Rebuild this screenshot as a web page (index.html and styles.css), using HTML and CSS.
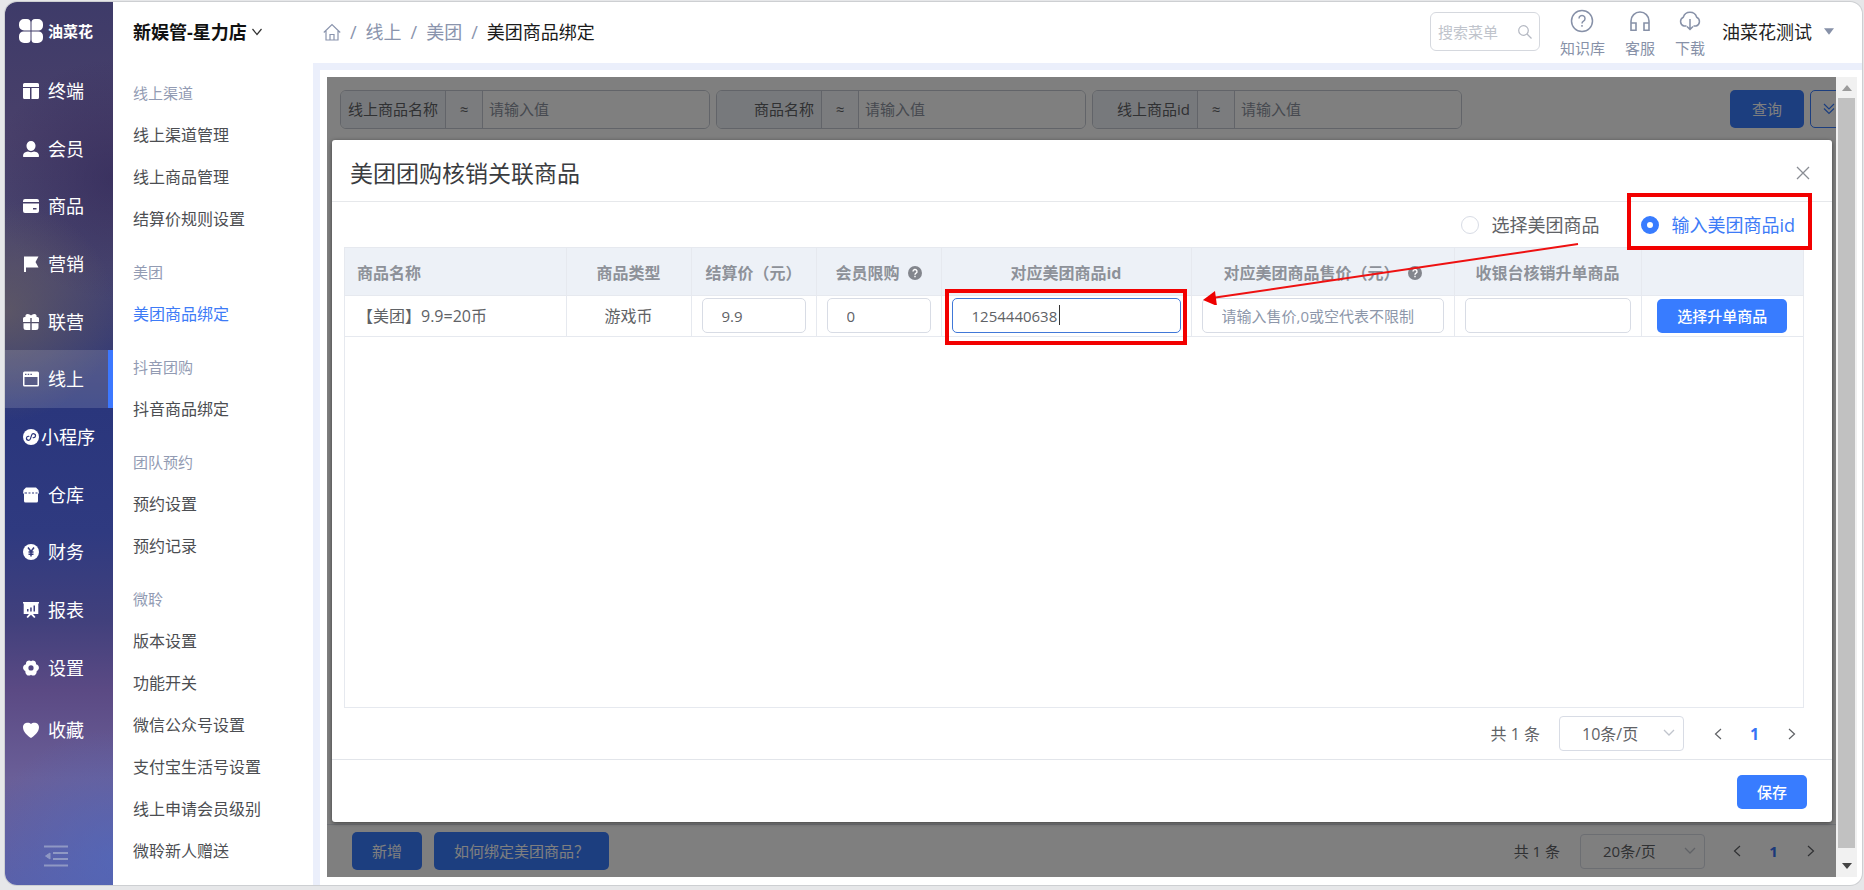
FILE: index.html
```html
<!DOCTYPE html>
<html lang="zh-CN">
<head>
<meta charset="utf-8">
<title>美团商品绑定</title>
<link rel="stylesheet" href="styles.css">
</head>
<body>
<div class="window">
  <aside class="rail">
    <div class="logo">
      <svg class="logo-mark" viewBox="0 0 24 24" fill="#fff"><path d="M5 0h3a3.500 3.500 0 0 1 3.500 3.500V11.500H5A5 5 0 0 1 0 6.500V5a5 5 0 0 1 5-5zM16 0h3a5 5 0 0 1 5 5v2a4.500 4.500 0 0 1-4.500 4.500H12.500V3.500A3.500 3.500 0 0 1 16 0zM4.500 12.500H11.500V20.500A3.500 3.500 0 0 1 8 24H5a5 5 0 0 1-5-5v-2a4.500 4.500 0 0 1 4.500-4.500zM12.500 12.500h7A4.500 4.500 0 0 1 24 17v2a5 5 0 0 1-5 5h-3a3.500 3.500 0 0 1-3.500-3.500z"/></svg>
      <span>油菜花</span>
    </div>
    <nav class="rail-nav">
      <a class="rail-item" href="#"><svg viewBox="0 0 16 16" fill="#fff"><path d="M1.500 0h13A1.500 1.500 0 0 1 16 1.500V4H0V1.500A1.500 1.500 0 0 1 1.500 0zM0 5h7v11H1.500A1.500 1.500 0 0 1 0 14.500zM8.500 5H16v9.500a1.500 1.500 0 0 1-1.500 1.500h-6z"/></svg><span>终端</span></a>
      <a class="rail-item" href="#"><svg viewBox="0 0 16 16" fill="#fff"><path d="M8 0a4.500 4.500 0 0 1 4.500 4.800C12.500 7.500 10.800 10 8 10S3.500 7.500 3.500 4.800A4.500 4.500 0 0 1 8 0zM5 10.500q3 1.500 6 0c3 .5 5 1.500 5 4.500 0 .7-.3 1-1 1H1c-.7 0-1-.3-1-1 0-3 2-4 5-4.500z"/></svg><span>会员</span></a>
      <a class="rail-item" href="#"><svg viewBox="0 0 16 16" fill="#fff"><path fill-rule="evenodd" d="M2 1h12a2 2 0 0 1 2 2v1H0V3a2 2 0 0 1 2-2zM0 5.500h16V13a2 2 0 0 1-2 2H2a2 2 0 0 1-2-2zM10 10v1.500h3.500V10z"/></svg><span>商品</span></a>
      <a class="rail-item" href="#"><svg viewBox="0 0 16 16" fill="#fff"><path d="M1 0.500h14.500L12.500 6l3 5.500H3V16H1z"/></svg><span>营销</span></a>
      <a class="rail-item" href="#"><svg viewBox="0 0 16 16" fill="#fff"><path d="M4.500 0C6.500 0 8 1.500 8 1.500S9.500 0 11.500 0A2.200 2.200 0 0 1 13.500 3h1A1.500 1.500 0 0 1 16 4.500V8H8.700V4H7.300v4H0V4.500A1.500 1.500 0 0 1 1.500 3h1a2.200 2.200 0 0 1 2-3zM.5 9.300h6.800V16H3a2.500 2.500 0 0 1-2.500-2.500zM8.700 9.300h6.800v4.200A2.500 2.500 0 0 1 13 16H8.700z"/></svg><span>联营</span></a>
      <a class="rail-item active" href="#"><svg viewBox="0 0 16 16" fill="#fff"><path fill-rule="evenodd" d="M1.500 .5h13A1.500 1.500 0 0 1 16 2v12a1.500 1.500 0 0 1-1.500 1.500h-13A1.500 1.500 0 0 1 0 14V2A1.500 1.500 0 0 1 1.500 .5zM1.500 6v8h13V6zM2 2.700V4h1.500V2.700zm2.700 0V4h1.500V2.700zm2.700 0V4h1.500V2.700z"/></svg><span>线上</span></a>
      <a class="rail-item wide" href="#"><svg viewBox="0 0 16 16"><circle cx="8" cy="8" r="8" fill="#fff"/><path d="M8 6a2 2 0 1 1 2.300 2M8 6v4a2 2 0 1 1-2.300-2" fill="none" stroke="#2b357c" stroke-width="1.200" stroke-linecap="round" transform="rotate(18 8 8)"/></svg><span>小程序</span></a>
      <a class="rail-item" href="#"><svg viewBox="0 0 16 16" fill="#fff"><path fill-rule="evenodd" d="M3 0.500h10L15.500 3 16 6.500H15V14a1.500 1.500 0 0 1-1.500 1.500h-11A1.500 1.500 0 0 1 1 14V6.500H0L.5 3zM1.500 5.500v1h2.500v-1zm4 0v1h2v-1zm3.500 0v1h2v-1zm3.500 0v1h2v-1z"/></svg><span>仓库</span></a>
      <a class="rail-item" href="#"><svg viewBox="0 0 16 16"><circle cx="8" cy="8" r="8" fill="#fff"/><path d="M5 3.500l3 4 3-4M8 7.500v5M5.500 8h5M5.500 10.300h5" fill="none" stroke="#343a7c" stroke-width="1.500"/></svg><span>财务</span></a>
      <a class="rail-item" href="#"><svg viewBox="0 0 16 16" fill="#fff"><path fill-rule="evenodd" d="M0 0h16v1.500h-.7V12H10l2.500 3-1.300 1L8 12.700 4.800 16l-1.300-1L6 12H.7V1.500H0zM4 7v2.500h1.500V7zm3.200-1.500v4h1.500v-4zM10.500 3.500v6H12v-6z"/></svg><span>报表</span></a>
      <a class="rail-item" href="#"><svg viewBox="0 0 16 16" fill="#fff"><path fill-rule="evenodd" d="M8 1.300C9.500-.5 13.500.8 13 4.200 16.500 5 17 9.500 13.700 11c.3 4-3.700 5.800-5.700 3.700-2 2.100-6 .3-5.700-3.700C-1 9.500-.5 5 3 4.200 2.500.8 6.500-.5 8 1.300zM8 5.300a2.600 2.600 0 1 0 0 5.200 2.600 2.600 0 0 0 0-5.200z"/></svg><span>设置</span></a>
      <a class="rail-item fav" href="#"><svg viewBox="0 0 16 16" fill="#fff"><path d="M8 2C9.800-.3 16 0 16 5.300 16 10 11 14.300 8 16 5 14.300 0 10 0 5.300 0 0 6.200-.3 8 2z"/></svg><span>收藏</span></a>
    </nav>
    <div class="rail-foot">
      <button class="collapse" aria-label="收起菜单"><svg viewBox="0 0 24 22" width="24" height="22" fill="none" stroke="#8f98c4" stroke-width="2"><path d="M0 1.500h24M9 8h15M9 14h15M0 20.500h24"/><path d="M6 8v6L1.500 11z" fill="#8f98c4" stroke-width="1"/></svg></button>
    </div>
  </aside>

  <div class="main">
    <header class="topbar">
      <button class="store">新娱管-星力店 <svg viewBox="0 0 10 8" width="10" height="8" fill="none" stroke="#333" stroke-width="1.200"><path d="M.5 1L5 6.500 9.500 1"/></svg></button>
      <nav class="crumbs">
        <a href="#" aria-label="首页"><svg viewBox="0 0 18 18" width="18" height="18" fill="none" stroke="#8a94ad" stroke-width="1.200"><path d="M.8 9.500L9 1.500l8.200 8M3 8v9h12V8M7 17v-5.500h4V17"/></svg></a>
        <i>/</i><a href="#">线上</a><i>/</i><a href="#">美团</a><i>/</i><b>美团商品绑定</b>
      </nav>
      <div class="tools">
        <label class="search"><input type="text" placeholder="搜索菜单" aria-label="搜索菜单"><svg viewBox="0 0 14 14" width="14" height="14" fill="none" stroke="#b4b8c2" stroke-width="1.200"><circle cx="5.500" cy="5.500" r="4.800"/><path d="M9 9l4.500 4.500"/></svg></label>
        <a class="tool" href="#"><svg viewBox="0 0 24 24" width="24" height="24" fill="none" stroke="#8791a8" stroke-width="1.500"><circle cx="12" cy="12" r="10.500"/><path d="M9 9.500a3 3 0 1 1 4.500 2.600c-1 .6-1.500 1-1.500 2.400M12 16v1.700"/></svg><span>知识库</span></a>
        <a class="tool" href="#"><svg viewBox="0 0 24 24" width="24" height="24" fill="none" stroke="#8791a8" stroke-width="1.600"><path d="M3 21v-9a9 9 0 0 1 18 0v9M3 14h5v7.200H3zM16 14h5v7.200h-5z"/></svg><span>客服</span></a>
        <a class="tool" href="#"><svg viewBox="0 0 24 24" width="24" height="24" fill="none" stroke="#8791a8" stroke-width="1.500"><path d="M8.500 17H6A4.700 4.700 0 0 1 5.300 8.200a7 7 0 0 1 13.400 0A4.700 4.700 0 0 1 18 17h-2.500M12 10v10M9 17.500l3 3 3-3"/></svg><span>下载</span></a>
        <button class="user">油菜花测试 <svg viewBox="0 0 12 8" width="10" height="7" fill="#8791a8"><path d="M0 0h12L6 8z"/></svg></button>
      </div>
    </header>

    <div class="body">
      <nav class="submenu">
        <section><h3>线上渠道</h3><a href="#">线上渠道管理</a><a href="#">线上商品管理</a><a href="#">结算价规则设置</a></section>
        <section><h3>美团</h3><a class="current" href="#">美团商品绑定</a></section>
        <section><h3>抖音团购</h3><a href="#">抖音商品绑定</a></section>
        <section><h3>团队预约</h3><a href="#">预约设置</a><a href="#">预约记录</a></section>
        <section><h3>微聆</h3><a href="#">版本设置</a><a href="#">功能开关</a><a href="#">微信公众号设置</a><a href="#">支付宝生活号设置</a><a href="#">线上申请会员级别</a><a href="#">微聆新人赠送</a></section>
      </nav>

      <div class="frame">
        <div class="page">
          <div class="filters">
            <div class="filter"><label for="f1">线上商品名称</label><span>≈</span><input id="f1" type="text" placeholder="请输入值"></div>
            <div class="filter"><label for="f2">商品名称</label><span>≈</span><input id="f2" type="text" placeholder="请输入值"></div>
            <div class="filter"><label for="f3">线上商品id</label><span>≈</span><input id="f3" type="text" placeholder="请输入值"></div>
            <div class="filter-actions">
              <button class="btn">查询</button>
              <button class="btn-more" aria-label="展开"><svg viewBox="0 0 12 12" width="12" height="12" fill="none" stroke="#387cff" stroke-width="1.200"><path d="M1 1l5 5 5-5M1 5.500l5 5 5-5"/></svg></button>
            </div>
          </div>
          <div class="list"></div>
          <div class="page-foot">
            <button class="btn">新增</button>
            <button class="btn">如何绑定美团商品？</button>
            <div class="pager">
              <span class="total">共 1 条</span>
              <span class="size"><select aria-label="每页条数"><option>20条/页</option></select><svg viewBox="0 0 12 8" width="12" height="8" fill="none" stroke="#c0c4cc" stroke-width="1.300"><path d="M1 1l5 5 5-5"/></svg></span>
              <button aria-label="上一页"><svg viewBox="0 0 8 12" width="8" height="12" fill="none" stroke="#606266" stroke-width="1.200"><path d="M7 1L1.500 6 7 11"/></svg></button>
              <button class="on">1</button>
              <button aria-label="下一页"><svg viewBox="0 0 8 12" width="8" height="12" fill="none" stroke="#606266" stroke-width="1.200"><path d="M1 1l5.500 5L1 11"/></svg></button>
            </div>
          </div>

          <div class="mask">
            <div class="modal" role="dialog" aria-labelledby="dlg-title">
              <div class="modal-head">
                <h2 id="dlg-title">美团团购核销关联商品</h2>
                <button class="close" aria-label="关闭"><svg viewBox="0 0 14 14" width="14" height="14" stroke="#8a8d94" stroke-width="1.300"><path d="M1 1l12 12M13 1L1 13"/></svg></button>
              </div>
              <div class="modal-body">
                <div class="modes">
                  <label><input type="radio" name="mode">选择美团商品</label>
                  <label class="checked"><input type="radio" name="mode" checked>输入美团商品id<span class="mark mark-radio"></span></label>
                </div>
                <div class="table-box">
                  <table>
                    <colgroup><col class="c-name"><col class="c-s"><col class="c-s"><col class="c-s"><col class="c-id"><col class="c-price"><col class="c-pos"><col class="c-act"></colgroup>
                    <thead><tr>
                      <th class="left">商品名称</th><th>商品类型</th><th>结算价（元）</th>
                      <th>会员限购<svg class="help" viewBox="0 0 14 14" width="14" height="14"><circle cx="7" cy="7" r="7" fill="#83868d"/><path d="M5 5.500a2 2 0 1 1 3 1.700c-.7.400-1 .7-1 1.500M7 9.800v1.400" fill="none" stroke="#fff" stroke-width="1.400"/></svg></th>
                      <th>对应美团商品id</th>
                      <th>对应美团商品售价（元）<svg class="help" viewBox="0 0 14 14" width="14" height="14"><circle cx="7" cy="7" r="7" fill="#83868d"/><path d="M5 5.500a2 2 0 1 1 3 1.700c-.7.400-1 .7-1 1.500M7 9.800v1.400" fill="none" stroke="#fff" stroke-width="1.400"/></svg></th>
                      <th>收银台核销升单商品</th><th></th>
                    </tr></thead>
                    <tbody><tr>
                      <td class="left">【美团】9.9=20币</td><td>游戏币</td>
                      <td><input type="text" value="9.9" aria-label="结算价"></td>
                      <td><input type="text" value="0" aria-label="会员限购"></td>
                      <td><div class="marked"><input class="focus" type="text" value="1254440638" aria-label="对应美团商品id"><span class="caret"></span><span class="mark mark-input"></span>
                        <svg class="arrow" viewBox="0 0 378 64" width="378" height="64"><path d="M376 3L10 57" stroke="#e11" stroke-width="2"/><path d="M1 59l12-9 2 15z" fill="#e00"/></svg></div></td>
                      <td><input type="text" placeholder="请输入售价,0或空代表不限制" aria-label="售价"></td>
                      <td><input type="text" aria-label="升单商品"></td>
                      <td><button class="btn small">选择升单商品</button></td>
                    </tr></tbody>
                  </table>
                </div>
                <div class="pager modal-pager">
                  <span class="total">共 1 条</span>
                  <span class="size"><select aria-label="每页条数"><option>10条/页</option></select><svg viewBox="0 0 12 8" width="12" height="8" fill="none" stroke="#c0c4cc" stroke-width="1.300"><path d="M1 1l5 5 5-5"/></svg></span>
                  <button aria-label="上一页"><svg viewBox="0 0 8 12" width="8" height="12" fill="none" stroke="#606266" stroke-width="1.200"><path d="M7 1L1.500 6 7 11"/></svg></button>
                  <button class="on">1</button>
                  <button aria-label="下一页"><svg viewBox="0 0 8 12" width="8" height="12" fill="none" stroke="#606266" stroke-width="1.200"><path d="M1 1l5.500 5L1 11"/></svg></button>
                </div>
              </div>
              <div class="modal-foot"><button class="btn small save">保存</button></div>
            </div>
          </div>
        </div>
        <div class="scrollbar">
          <svg viewBox="0 0 10 6" width="10" height="6" fill="#9b9b9b"><path d="M0 6h10L5 0z"/></svg>
          <div class="thumb"></div>
          <svg class="down" viewBox="0 0 10 6" width="10" height="6" fill="#444"><path d="M0 0h10L5 6z"/></svg>
        </div>
      </div>
    </div>
  </div>
</div>
</body>
</html>
```
FILE: styles.css
```css
* { box-sizing: border-box; }
body {
  margin: 0;
  height: 100vh;
  padding: 2px 2px 5px 5px;
  background: #e6e7e9;
  color: #606266;
  font: 16px/24px "Open Sans", "Noto Sans CJK SC", sans-serif;
}
a { color: inherit; text-decoration: none; }
button, input, select { font: inherit; color: inherit; margin: 0; }
button { border: 0; background: none; padding: 0; cursor: pointer; }
svg { display: block; flex: none; }
h2, h3 { margin: 0; font-weight: 400; }

.window {
  display: flex;
  height: 100%;
  border-radius: 12px;
  overflow: hidden;
  background: #fff;
  box-shadow: 0 0 0 1px #cdcfd2;
}

/* primary navigation */
.rail {
  width: 108px;
  flex: none;
  display: flex;
  flex-direction: column;
  color: #fff;
  background:
    radial-gradient(circle at 0 35%, rgba(110, 100, 95, .6), transparent 110px),
    radial-gradient(circle at 100% 97%, rgba(80, 105, 190, .65), transparent 130px),
    radial-gradient(circle at 100% 20%, rgba(45, 35, 85, .5), transparent 120px),
    linear-gradient(180deg, #3e3b69 0, #49406a 15%, #48456f 30%, #3c3f72 38%, #2a367c 46%, #2f3a80 60%, #41407c 70%, #5b4a84 78%, #6a5f98 88%, #5a60a8 100%);
}
.logo {
  display: flex;
  align-items: center;
  gap: 5px;
  height: 60px;
  padding: 0 0 2px 14px;
  font-size: 15px;
  font-weight: 700;
}
.logo-mark { width: 24px; height: 24px; }
.rail-nav { flex: 1; display: flex; flex-direction: column; }
.rail-item {
  flex: 1;
  display: flex;
  align-items: center;
  gap: 9px;
  padding-left: 18px;
  font-size: 18px;
}
.rail-item svg { width: 16px; height: 16px; }
.rail-item.wide { gap: 2px; }
.rail-item.active { background: rgba(255, 255, 255, .14); border-right: 5px solid #3c78ff; }
.rail-item.fav { margin-top: 5px; }
.rail-foot { height: 126px; display: flex; justify-content: center; align-items: flex-end; padding: 0 6px 18px 0; }

.main { flex: 1; min-width: 0; display: flex; flex-direction: column; }

/* header */
.topbar { height: 61px; flex: none; display: flex; align-items: center; padding: 0 28px 2px 20px; }
.store { display: flex; align-items: center; gap: 5px; width: 190px; font-size: 18px; font-weight: 700; color: #111; }
.crumbs { display: flex; align-items: center; gap: 9px; font-size: 18px; color: #8a94ad; }
.crumbs i { font-style: normal; }
.crumbs b { font-weight: 400; color: #1a1a1a; }
.tools { margin-left: auto; display: flex; align-items: center; gap: 20px; color: #8791a8; }
.search {
  display: flex;
  align-items: center;
  width: 110px;
  height: 39px;
  padding: 0 7px;
  border: 1px solid #d5d8de;
  border-radius: 6px;
  font-size: 15px;
}
.search input { flex: 1; min-width: 0; border: 0; outline: 0; padding: 0; background: none; }
.search input::placeholder { color: #c0c4cc; }
.tool { display: flex; flex-direction: column; align-items: center; font-size: 15px; gap: 3px; padding-top: 5px; }
.user { display: flex; align-items: center; gap: 12px; margin-left: -3px; font-size: 18px; color: #222; }

/* secondary navigation */
.body { flex: 1; min-height: 0; display: flex; }
.submenu { width: 200px; flex: none; padding: 10px 0 0 20px; overflow: hidden; color: #4c4e52; }
.submenu section { margin-bottom: 12px; }
.submenu h3 { font-size: 15px; line-height: 41px; color: #929bb3; }
.submenu a { display: block; line-height: 42px; }
.submenu .current { color: #3d7bf7; }

/* framed page */
.frame {
  flex: 1;
  min-width: 0;
  display: flex;
  border: 7px solid #ebeffb;
  border-width: 7px 0 0 7px;
  padding: 7px 5px 8px 7px;
}
.page { position: relative; flex: 1; min-width: 0; display: flex; flex-direction: column; overflow: hidden; }
.filters { display: flex; gap: 6px; padding: 13px 0 0 13px; font-size: 15px; }
.filter {
  flex: none;
  display: flex;
  align-items: stretch;
  width: 370px;
  height: 39px;
  border: 1px solid #c4c9d2;
  border-radius: 6px;
  overflow: hidden;
}
.filter label { width: 105px; padding-right: 7px; line-height: 36px; text-align: right; background: #eff3f9; border-right: 1px solid #c4c9d2; }
.filter span { width: 37px; line-height: 36px; text-align: center; background: #f7f9fc; border-right: 1px solid #c4c9d2; }
.filter input { flex: 1; min-width: 0; border: 0; padding: 0 6px 2px; background: #fff; }
.filter input::placeholder { color: #8d93a0; }
.filter-actions { margin: 0 -24px 0 auto; display: flex; gap: 6px; align-items: flex-start; }
.btn {
  height: 38px;
  padding: 0 20px;
  border-radius: 5px;
  background: #387cff;
  color: #fff;
  font-size: 15px;
  white-space: nowrap;
}
.filters .btn { padding: 0 22px; }
.btn-more { width: 50px; height: 38px; padding-left: 12px; border: 1px solid #387cff; border-radius: 5px; }
.list { flex: 1; border-bottom: 1px solid #dfe3ea; }
.page-foot { display: flex; align-items: center; gap: 12px; padding: 7px 7px 7px 25px; font-size: 15px; }
.page-foot .pager { margin-left: auto; }
.page-foot .size { margin: 0 13px 0 20px; }

.pager { display: flex; align-items: center; }
.pager > button { width: 37px; height: 34px; display: flex; align-items: center; justify-content: center; }
.pager .on { color: #3673f5; font-weight: 700; }
.size { position: relative; margin: 0 15px 0 19px; }
.size select {
  appearance: none;
  display: block;
  width: 125px;
  height: 35px;
  padding: 0 22px;
  border: 1px solid #d8dce5;
  border-radius: 4px;
  background: #fff;
}
.size svg { position: absolute; right: 9px; top: 13px; }

/* dialog */
.mask { position: absolute; inset: 0; background: rgba(0, 0, 0, .5); padding: 63px 4px 55px 5px; }
.modal { height: 100%; display: flex; flex-direction: column; background: #fff; border-radius: 3px; box-shadow: 0 1px 4px rgba(0, 0, 0, .5); }
.modal-head { display: flex; align-items: center; justify-content: space-between; height: 62px; padding: 4px 22px 0 18px; border-bottom: 1px solid #e6e8eb; }
.modal-head h2 { font-size: 23px; line-height: 32px; color: #3a3c40; }
.modal-body { flex: 1; display: flex; flex-direction: column; padding: 0 28px 0 12px; }
.modes { display: flex; justify-content: flex-end; align-items: center; gap: 42px; height: 45px; padding-right: 9px; font-size: 18px; }
.modes label { position: relative; display: flex; align-items: center; gap: 12px; }
.modes input { appearance: none; width: 18px; height: 18px; border: 1px solid #d8dce5; border-radius: 50%; background: #fff; }
.modes input:checked { border: 6px solid #387cff; }
.modes .checked { color: #3d7bf7; }
.mark { position: absolute; border: 4px solid #f20000; pointer-events: none; }
.mark-radio { inset: -20px -17px -13px -14px; }
.mark-input { inset: -9px -6px -12px -7px; }
.caret { position: absolute; left: 107px; top: 7px; width: 1px; height: 20px; background: #333; }
.arrow { position: absolute; left: 250px; top: -57px; z-index: 1; pointer-events: none; }

.table-box { flex: 1; border: 1px solid #e6e9ef; }
table { width: 100%; table-layout: fixed; border-collapse: collapse; }
.c-name { width: 221px; }
.c-s { width: 125px; }
.c-id { width: 250px; }
.c-price { width: 263px; }
.c-pos { width: 187px; }
th, td { padding: 0 10px; text-align: center; white-space: nowrap; border: 1px solid #e6e9ef; border-width: 0 1px 1px 0; }
tr > :last-child { border-right: 0; }
th { height: 47px; padding: 3px 0 0; background: #edf1f7; color: #8d9199; font-weight: 700; }
td { height: 41px; }
th.left, td.left { text-align: left; padding-left: 12px; }
.help { display: inline-block; margin-left: 8px; vertical-align: -1px; }
td input {
  display: block;
  width: 100%;
  height: 35px;
  padding: 0 19px;
  border: 1px solid #d8dce5;
  border-radius: 5px;
  outline: 0;
  font-size: 15px;
}
td input::placeholder { color: #8d97aa; }
td .focus { border-color: #4078d8; }
.marked { position: relative; }
.btn.small { height: 34px; font-weight: 500; }
.modal-pager { justify-content: flex-end; height: 51px; margin-right: -6px; }
.modal-foot { display: flex; justify-content: flex-end; height: 63px; padding: 15px 25px 0 0; border-top: 1px solid #e2e5ea; }

/* page scroll bar */
.scrollbar { width: 21px; flex: none; display: flex; flex-direction: column; align-items: center; gap: 7px; padding: 8px 0 8px; background: #f1f1f1; }
.thumb { flex: 1; width: 17px; background: #c1c1c1; }
.scrollbar .down { margin-top: 8px; }
```
